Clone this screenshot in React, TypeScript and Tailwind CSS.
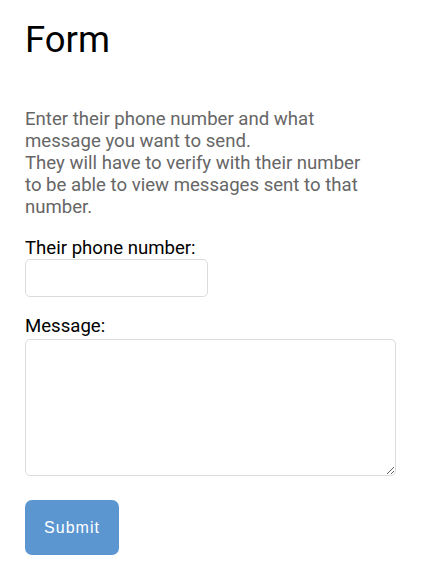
import React from "react";

export default function App() {
  return (
    <div className="min-h-[573px] w-[439px] bg-white pl-[25px] pt-[19px]" style={{ fontFamily: "Roboto, 'Liberation Sans', sans-serif" }}>
      <div className="w-[371px] flex flex-col">
        <h1 className="text-[36.5px] leading-[42px] font-normal text-black">Form</h1>
        <p className="mt-[47px] w-[350px] text-[18.6px] leading-[22px] text-[#666666]">
          Enter their phone number and what message you want to send.
          <br />
          They will have to verify with their number to be able to view messages sent to that number.
        </p>
        <label className="mt-[20px] block text-[18.6px] leading-[21px] text-black">Their phone number:</label>
        <input type="text" className="w-[183px] h-[38px] border border-[#dcdcdc] rounded-[5px] bg-white outline-none" />
        <label className="mt-[19px] block text-[18.6px] leading-[21px] text-black">Message:</label>
        <textarea className="mt-[2px] w-[371px] h-[137px] border border-[#dcdcdc] rounded-[5px] bg-white outline-none resize" />
        <div className="mt-[24px]">
          <button
            className="w-[94px] h-[55px] rounded-[7px] bg-[#5b96d1] text-white text-[16px] tracking-[1px]"
            style={{ fontFamily: "'Liberation Sans', Arial, sans-serif" }}
          >
            Submit
          </button>
        </div>
      </div>
    </div>
  );
}
